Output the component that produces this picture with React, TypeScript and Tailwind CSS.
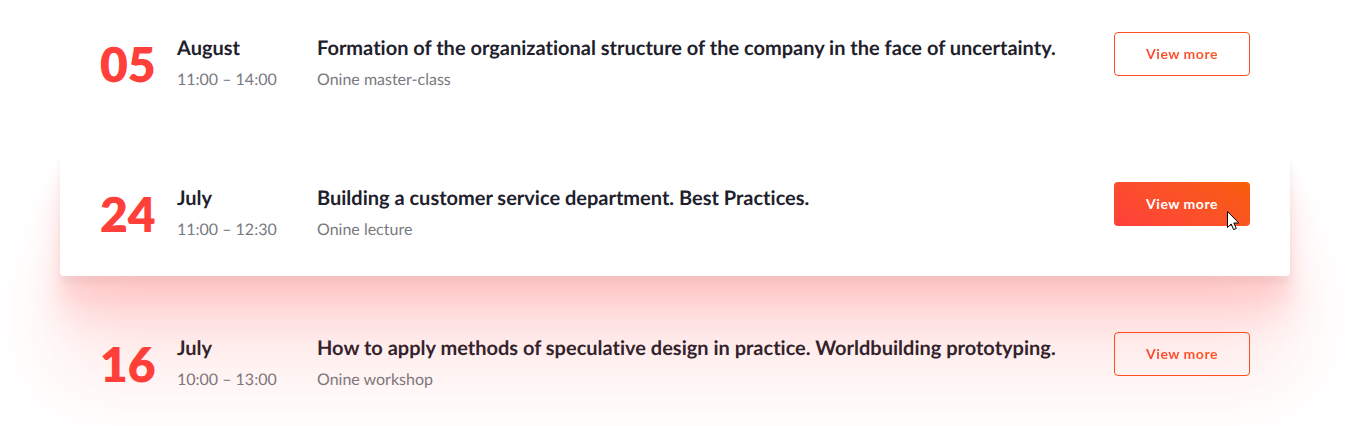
type Event = { day: string; month: string; time: string; title: string; kind: string; active?: boolean };

const events: Event[] = [
  { day: "05", month: "August", time: "11:00 – 14:00", title: "Formation of the organizational structure of the company in the face of uncertainty.", kind: "Onine master-class" },
  { day: "24", month: "July", time: "11:00 – 12:30", title: "Building a customer service department. Best Practices.", kind: "Onine lecture", active: true },
  { day: "16", month: "July", time: "10:00 – 13:00", title: "How to apply methods of speculative design in practice. Worldbuilding prototyping.", kind: "Onine workshop" },
];

function Pointer() {
  return (
    <svg className="pointer-events-none absolute right-2.5 -bottom-1.5" width="14" height="22" viewBox="0 0 14 22" aria-hidden="true">
      <path d="M1.5 1.5v16l3.7-3.5 2.4 5.6 2.7-1.1-2.4-5.5h5z" fill="#fff" stroke="#000" strokeWidth="1" />
    </svg>
  );
}

function EventRow({ day, month, time, title, kind, active }: Event) {
  return (
    <li
      className={
        active
          ? "relative z-10 flex items-start rounded bg-white px-10 pt-8 pb-7 shadow-[0_100px_80px_rgba(255,63,58,0.12),0_42px_34px_rgba(255,63,58,0.13),0_22px_18px_rgba(255,63,58,0.08),0_7px_6px_rgba(40,0,0,0.05)]"
          : "flex items-start px-10 pt-8 pb-7"
      }
    >
      <div className="w-[77px] shrink-0 text-5xl leading-[66px] font-extrabold text-[#ff3f3a]">{day}</div>
      <div className="w-[140px] shrink-0">
        <div className="text-xl leading-8 font-bold text-[#1e212c]">{month}</div>
        <div className="text-base leading-8 text-[#787a80]">{time}</div>
      </div>
      <div className="min-w-0 flex-1">
        <h2 className="text-xl leading-8 font-bold text-[#1e212c]">{title}</h2>
        <p className="text-base leading-8 text-[#787a80]">{kind}</p>
      </div>
      <div className="relative shrink-0">
        <button
          type="button"
          className={
            active
              ? "h-11 w-[136px] rounded bg-linear-30 from-[#ff3f3a] to-[#f75e05] text-sm font-bold tracking-[0.5px] text-white"
              : "relative h-11 w-[136px] rounded bg-linear-30 from-[#ff3f3a] to-[#f75e05] bg-clip-text text-sm font-bold tracking-[0.5px] text-transparent before:absolute before:inset-0 before:rounded before:border before:border-[#fd501d]"
          }
        >
          View more
        </button>
        {active && <Pointer />}
      </div>
    </li>
  );
}

export default function App() {
  return (
    <main className="overflow-hidden bg-white font-['Lato',sans-serif] [font-variant-ligatures:no-common-ligatures] [text-rendering:geometricPrecision]">
      <ul className="isolate flex flex-col gap-6 px-[60px]">
        {events.map((event) => (
          <EventRow key={event.day} {...event} />
        ))}
      </ul>
    </main>
  );
}
